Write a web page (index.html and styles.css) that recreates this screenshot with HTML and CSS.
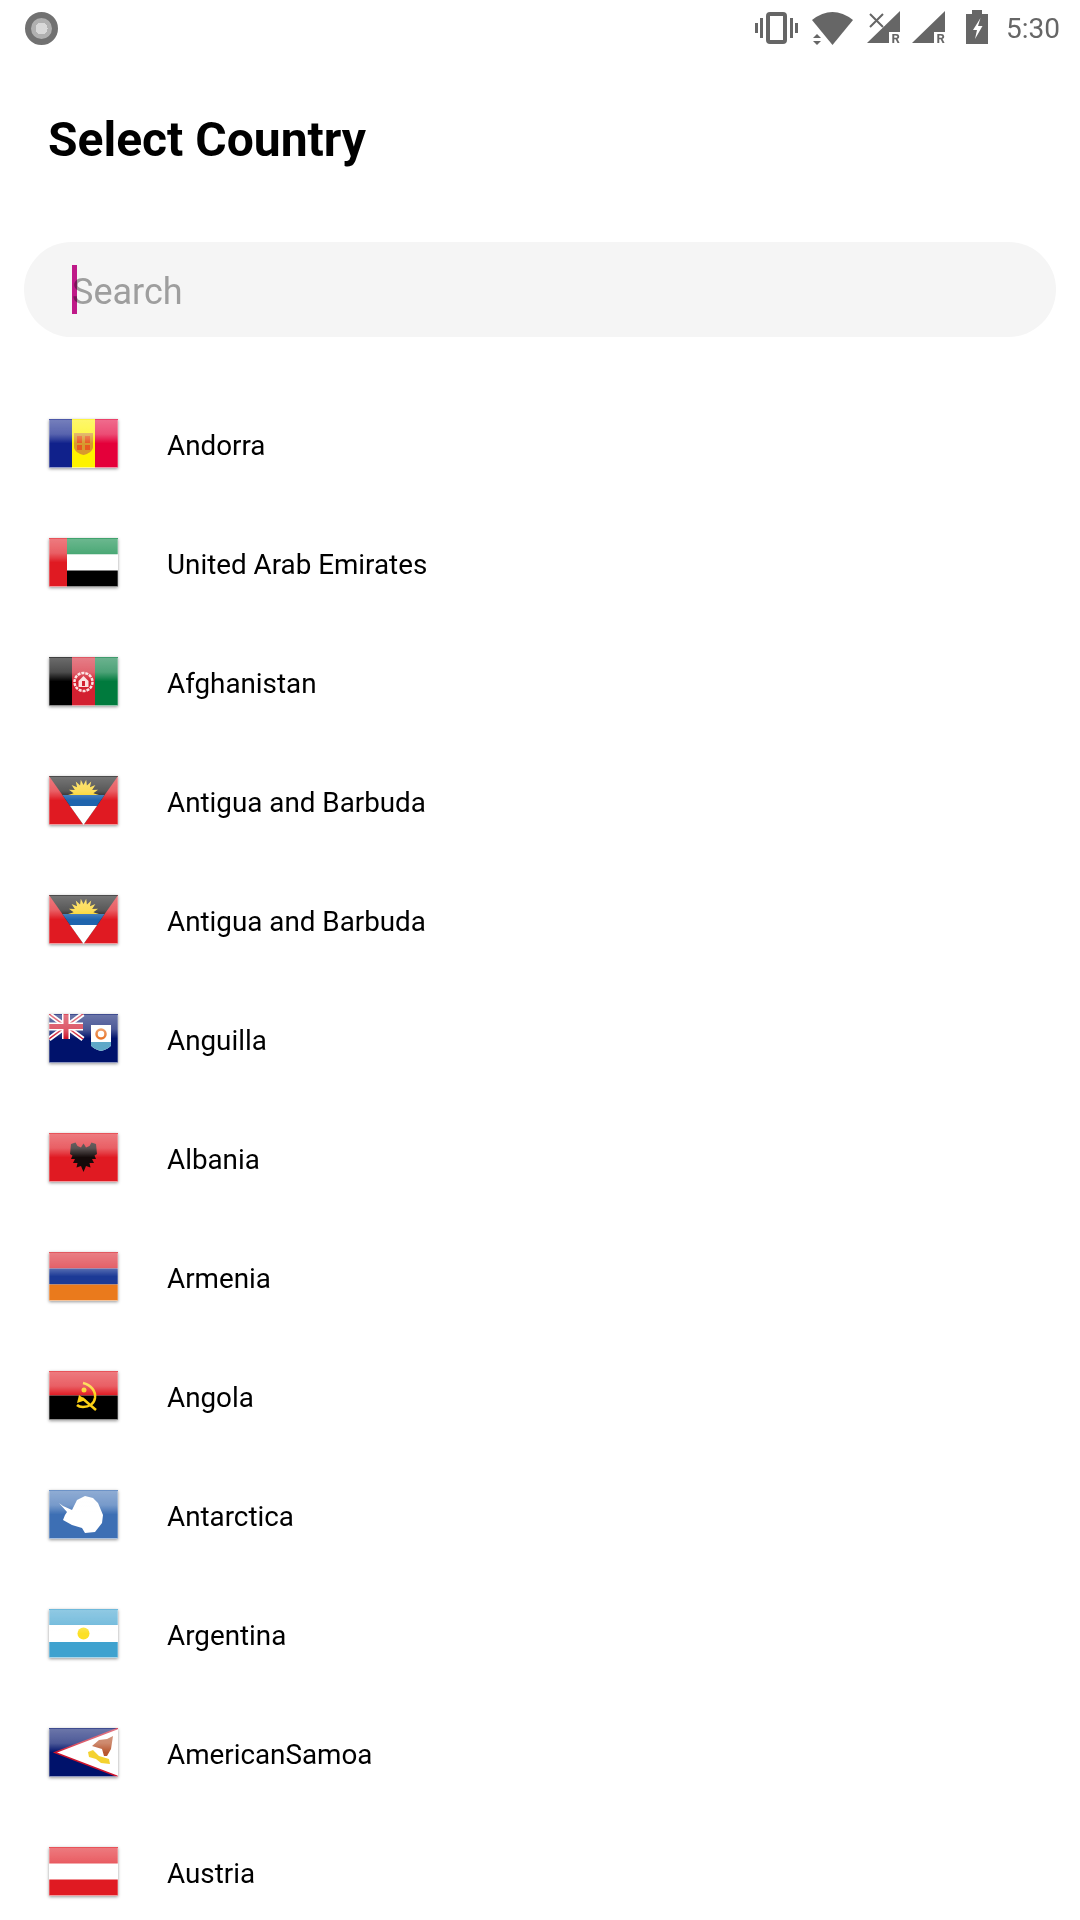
FILE: index.html
```html
<!DOCTYPE html>
<html lang="en">
<head>
    <meta charset="UTF-8">
    <meta name="viewport" content="width=device-width, initial-scale=1.0">
    <title>Select Country</title>
    <link rel="stylesheet" href="styles.css">
</head>
<body>
    <div class="statusbar">
        <div class="notif-dot"></div>
        <div class="status-icons">
            <svg width="43" height="36" viewBox="0 0 43 36">
                <rect x="13" y="4" width="17" height="28" rx="2" fill="none" stroke="#666" stroke-width="4"/>
                <path d="M0 13h3v10H0zM5 8h3v20H5zM35 8h3v20h-3zM40 13h3v10h-3z" fill="#666"/>
            </svg>
            <svg width="41" height="36" viewBox="0 0 41 36">
                <path d="M0 10Q20.500-6 41 10L20.500 35z" fill="#666"/>
                <path d="M0 24h11v12H0z" fill="#fff"/>
                <path d="M5 24l4 4H1zM5 35l4-4H1z" fill="#666"/>
            </svg>
            <svg width="33" height="36" viewBox="0 0 33 36">
                <path d="M33 1V22H22V33H0z" fill="#666"/>
                <path d="M3 4l13 13M16 4L3 17" stroke="#fff" stroke-width="6" fill="none"/>
                <path d="M3 4l13 13M16 4L3 17" stroke="#666" stroke-width="2" fill="none"/>
                <text class="signal-r" x="24.500" y="33">R</text>
            </svg>
            <svg class="signal-second" width="33" height="36" viewBox="0 0 33 36">
                <path d="M33 1V22H22V33H0z" fill="#666"/>
                <text class="signal-r" x="24.500" y="33">R</text>
            </svg>
            <svg class="icon-battery" width="22" height="36" viewBox="0 0 22 36">
                <path d="M6 0h10v4h6v30H0V4h6z" fill="#666"/>
                <path d="M14.500 8L7 20h4l-2 9 7.500-13H12l2.500-8z" fill="#fff"/>
            </svg>
            <span class="clock">5:30</span>
        </div>
    </div>

    <h1 class="title">Select Country</h1>

    <div class="search">
        <span class="search-text">Search</span>
        <span class="caret"></span>
    </div>

    <svg class="defs" width="0" height="0">
        <symbol id="flag-ag" viewBox="0 0 69 49">
            <rect width="69" height="49" fill="#e01a22"/>
            <path d="M0 0h69L34.500 49z" fill="#111"/>
            <path d="M19 19 24.650 17.260 19.930 13.700 25.840 14 22.630 9.040 28.070 11.340 26.750 5.580 31.080 9.600 31.810 3.740 34.500 9 37.190 3.740 37.920 9.600 42.250 5.580 40.930 11.340 46.370 9.040 43.160 14 49.070 13.700 44.350 17.260 50 19z" fill="#fcd116"/>
            <circle cx="34.500" cy="19" r="10" fill="#fcd116"/>
            <path d="M13.400 19h42.200L48 30H21z" fill="#1f64ad"/>
            <path d="M21 30h27L34.500 49z" fill="#fff"/>
        </symbol>
    </svg>

    <div class="country-list">
        <div class="country">
            <div class="flag">
                <svg viewBox="0 0 69 49">
                    <rect width="23" height="49" fill="#10218b"/>
                    <rect x="23" width="23" height="49" fill="#fef200"/>
                    <rect x="46" width="23" height="49" fill="#e4003a"/>
                    <path d="M25 14h19v14c0 4-5 7-9.500 8C30 35 25 32 25 28z" fill="#d89a2e"/>
                    <path d="M28 17h5v7h-5zM36 17h5v7h-5zM28 26h5v5h-5zM36 26h5v5h-5z" fill="#e85a20"/>
                </svg>
            </div>
            <span class="country-name">Andorra</span>
        </div>
        <div class="country">
            <div class="flag">
                <svg viewBox="0 0 69 49">
                    <rect width="69" height="16.500" fill="#00843d"/>
                    <rect y="16.500" width="69" height="16" fill="#fff"/>
                    <rect y="32.500" width="69" height="16.500" fill="#000"/>
                    <rect width="18" height="49" fill="#e01a22"/>
                </svg>
            </div>
            <span class="country-name">United Arab Emirates</span>
        </div>
        <div class="country">
            <div class="flag">
                <svg viewBox="0 0 69 49">
                    <rect width="23" height="49" fill="#000"/>
                    <rect x="23" width="23" height="49" fill="#d32030"/>
                    <rect x="46" width="23" height="49" fill="#007a3d"/>
                    <circle cx="34.500" cy="25" r="9" fill="none" stroke="#fbe0e0" stroke-width="2.500" stroke-dasharray="3 1"/>
                    <path d="M29.500 30v-6l5-5 5 5v6z" fill="#fbe0e0"/>
                    <rect x="33" y="24" width="3" height="5" fill="#d32030"/>
                </svg>
            </div>
            <span class="country-name">Afghanistan</span>
        </div>
        <div class="country">
            <div class="flag"><svg viewBox="0 0 69 49"><use href="#flag-ag"/></svg></div>
            <span class="country-name">Antigua and Barbuda</span>
        </div>
        <div class="country">
            <div class="flag"><svg viewBox="0 0 69 49"><use href="#flag-ag"/></svg></div>
            <span class="country-name">Antigua and Barbuda</span>
        </div>
        <div class="country">
            <div class="flag">
                <svg viewBox="0 0 69 49">
                    <rect width="69" height="49" fill="#00126b"/>
                    <path d="M0 0l34 25M34 0L0 25" stroke="#fff" stroke-width="5"/>
                    <path d="M0 0l34 25M34 0L0 25" stroke="#cf142b" stroke-width="1.500"/>
                    <path d="M17 0v25M0 12.500h34" stroke="#fff" stroke-width="8"/>
                    <path d="M17 0v25M0 12.500h34" stroke="#cf142b" stroke-width="5"/>
                    <path d="M42 11h20v20c0 2-6 5-10 6-4-1-10-4-10-6z" fill="#fff"/>
                    <path d="M42 28h20v3c0 2-6 5-10 6-4-1-10-4-10-6z" fill="#5fa8c8"/>
                    <circle cx="52" cy="20" r="4.500" fill="none" stroke="#e8762a" stroke-width="2.500"/>
                </svg>
            </div>
            <span class="country-name">Anguilla</span>
        </div>
        <div class="country">
            <div class="flag">
                <svg viewBox="0 0 69 49">
                    <rect width="69" height="49" fill="#e01a22"/>
                    <path d="M34.500 39l-2.500-6-4.500 1.500 1-4.500-4.500 0 2-4-4 0 1.500-3.500-2.500-1.500 1-10 4.500-1.500 2 3.500 3.500 1.500 1.500-2.500 1-1.500 1 1.500 1.500 2.500 3.500-1.500 2-3.500 4.500 1.500 1 10-2.500 1.500 1.500 3.500-4 0 2 4-4.500 0 1 4.500-4.500-1.500z" fill="#140a0a"/>
                </svg>
            </div>
            <span class="country-name">Albania</span>
        </div>
        <div class="country">
            <div class="flag">
                <svg viewBox="0 0 69 49">
                    <rect width="69" height="16.500" fill="#d9202a"/>
                    <rect y="16.500" width="69" height="16" fill="#1c3a96"/>
                    <rect y="32.500" width="69" height="16.500" fill="#ea7a1c"/>
                </svg>
            </div>
            <span class="country-name">Armenia</span>
        </div>
        <div class="country">
            <div class="flag">
                <svg viewBox="0 0 69 49">
                    <rect width="69" height="24.500" fill="#e01a22"/>
                    <rect y="24.500" width="69" height="24.500" fill="#000"/>
                    <path d="M34 12c8 2 13 8 12 15-1 6-6 9-12 9-3 0-5-1-6-2" fill="none" stroke="#fcd116" stroke-width="2.500"/>
                    <path d="M33 27l14 12" stroke="#fcd116" stroke-width="2.500"/>
                    <path d="M30 24l7 5-9 3z" fill="#fcd116"/>
                    <circle cx="35" cy="19" r="2.500" fill="#fcd116"/>
                </svg>
            </div>
            <span class="country-name">Angola</span>
        </div>
        <div class="country">
            <div class="flag">
                <svg viewBox="0 0 69 49">
                    <rect width="69" height="49" fill="#3d6fb4"/>
                    <path d="M10 13l4 3 9 4 5-10 8-4 8 2 5 5 5 12-1 8-7 9-10 1-3-5-10-3-9-5 2-5 2-3z" fill="#fff"/>
                </svg>
            </div>
            <span class="country-name">Antarctica</span>
        </div>
        <div class="country">
            <div class="flag">
                <svg viewBox="0 0 69 49">
                    <rect width="69" height="49" fill="#3fa2cf"/>
                    <rect y="16" width="69" height="17" fill="#fff"/>
                    <circle cx="34.500" cy="24.500" r="6" fill="#fce025"/>
                </svg>
            </div>
            <span class="country-name">Argentina</span>
        </div>
        <div class="country">
            <div class="flag">
                <svg viewBox="0 0 69 49">
                    <rect width="69" height="49" fill="#00126b"/>
                    <path d="M70 0v49L6 24.500z" fill="#fff" stroke="#cf142b" stroke-width="1.500"/>
                    <path d="M64 8l-2 13-4 7-3 0-2-7-10-3 7-6 8-1z" fill="#b8562e"/>
                    <path d="M39 24l5-2 6 6 10 3 1 5-9-1-5-4-7-2z" fill="#f4d230"/>
                </svg>
            </div>
            <span class="country-name">AmericanSamoa</span>
        </div>
        <div class="country">
            <div class="flag">
                <svg viewBox="0 0 69 49">
                    <rect width="69" height="49" fill="#e01a22"/>
                    <rect y="16.500" width="69" height="16" fill="#fff"/>
                </svg>
            </div>
            <span class="country-name">Austria</span>
        </div>
    </div>
</body>
</html>
```

FILE: styles.css
```css
html, body {
    margin: 0;
    height: 1920px;
    overflow: hidden;
    background: #fff;
    font-family: Roboto, "Noto Sans", sans-serif;
}

.statusbar {
    height: 56px;
    display: flex;
    align-items: center;
    justify-content: space-between;
    padding: 0 20px 0 25px;
}

.notif-dot {
    width: 21px;
    height: 21px;
    border-radius: 50%;
    border: 6px solid #717171;
    background: radial-gradient(circle, #d8d8d8 0 6px, #b0b0b0 6px);
}

.status-icons {
    display: flex;
    align-items: center;
    gap: 14px;
}

.signal-second { margin-left: -2px; }
.icon-battery { margin: 0 4px 0 7px; }

.signal-r {
    font-family: Roboto, sans-serif;
    font-size: 13px;
    font-weight: 700;
    fill: #666;
}

.clock {
    font-size: 28px;
    color: #666;
}

.defs {
    position: absolute;
}

.title {
    margin: 56px 0 0 48px;
    font-size: 48px;
    line-height: 56px;
    font-weight: 700;
    color: #000;
}

.search {
    position: relative;
    box-sizing: border-box;
    height: 95px;
    margin: 74px 24px 0;
    padding: 4px 0 0 48px;
    display: flex;
    align-items: center;
    border-radius: 48px;
    background: #f5f5f5;
}

.caret {
    position: absolute;
    left: 48px;
    top: 23px;
    width: 5px;
    height: 49px;
    background: #c71a8e;
    mix-blend-mode: multiply;
}

.search-text {
    font-size: 36px;
    color: #9e9e9e;
}

.country-list {
    margin-top: 48px;
}

.country {
    height: 119px;
    display: flex;
    align-items: center;
    padding-left: 49px;
}

.flag {
    position: relative;
    width: 69px;
    height: 49px;
    margin: 0 49px 2px 0;
    box-shadow: 0 1px 3px rgba(0, 0, 0, 0.4);
}

.flag svg {
    display: block;
    width: 100%;
    height: 100%;
    filter: blur(0.5px);
}

/* glossy top and pale edge of the flag icons */
.flag::after {
    content: "";
    position: absolute;
    inset: 0;
    box-sizing: border-box;
    border: 1px solid rgba(255, 255, 255, 0.25);
    background: linear-gradient(rgba(255, 255, 255, 0.42), rgba(255, 255, 255, 0.3) 30%, rgba(255, 255, 255, 0) 50%);
}

.country-name {
    padding-top: 2px;
    font-size: 27.8px;
    color: #000;
}
```
